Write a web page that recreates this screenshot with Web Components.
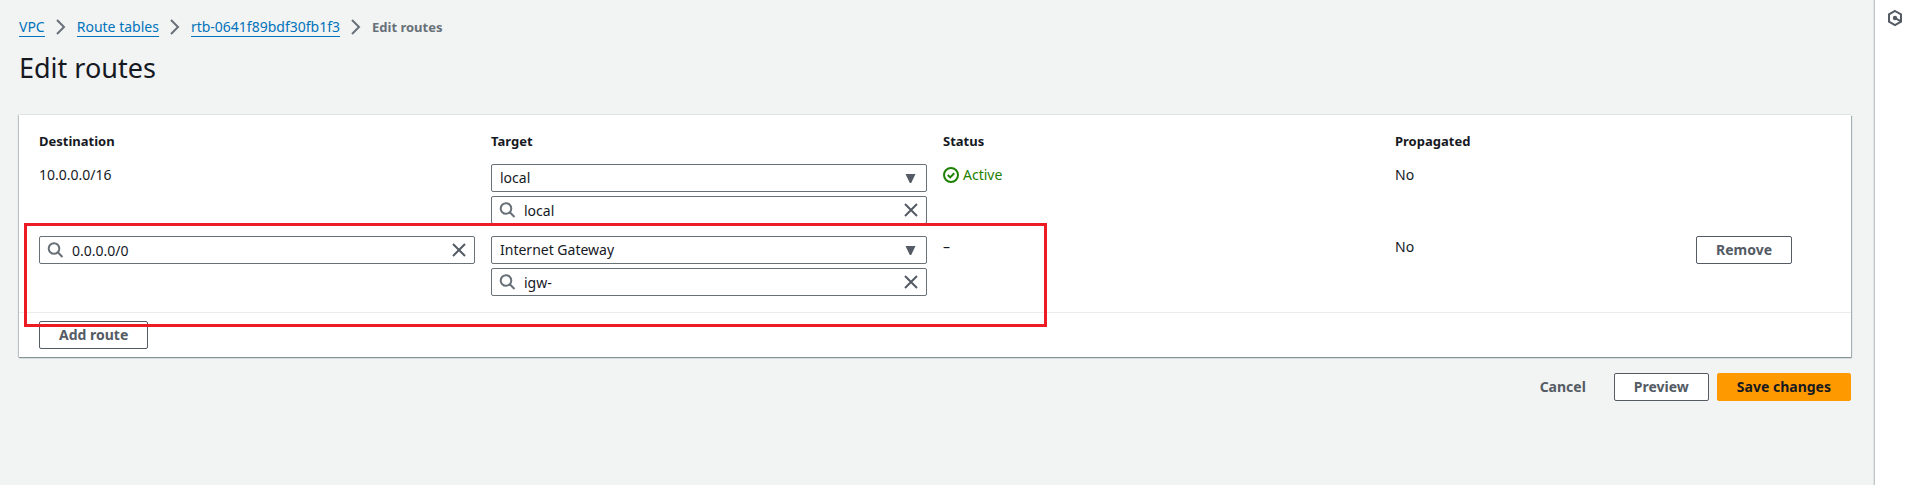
<!DOCTYPE html>
<html lang="en">
<head>
<meta charset="utf-8">
<title>Edit routes</title>
<style>
  html, body { height: 100%; }
  body { margin: 0; background: #f2f3f3; color: #16191f; font: 14px/22px "Noto Sans", "Open Sans", sans-serif; }
</style>
</head>
<body>
<console-shell>
  <crumb-trail>
    <crumb-link href="#vpc">VPC</crumb-link>
    <crumb-link href="#route-tables">Route tables</crumb-link>
    <crumb-link href="#rtb">rtb-0641f89bdf30fb1f3</crumb-link>
    <crumb-link>Edit routes</crumb-link>
  </crumb-trail>
  <page-title>Edit routes</page-title>
  <route-editor></route-editor>
  <form-actions>
    <ui-button variant="link">Cancel</ui-button>
    <ui-button>Preview</ui-button>
    <ui-button variant="primary">Save changes</ui-button>
  </form-actions>
</console-shell>

<script>
const define = (name, html, setup) => {
  const template = document.createElement('template');
  template.innerHTML = html;
  customElements.define(name, class extends HTMLElement {
    constructor() {
      super();
      this.attachShadow({ mode: 'open' }).append(template.content.cloneNode(true));
    }
    connectedCallback() { if (setup) setup(this, this.shadowRoot); }
  });
};

define('console-shell', `
  <style>
    :host { display: flex; min-height: 100%; }
    main { flex: 1; min-width: 0; padding: 16px 23px 24px 19px; }
    aside { flex: none; width: 38px; box-sizing: border-box; background: #fff; border-left: 1px solid #bfc5c7; box-shadow: -1px 0 0 #e1e4e4; display: flex; justify-content: center; align-items: flex-start; padding: 8px 0 0 3px; }
    button { border: 0; padding: 0; background: none; display: flex; }
  </style>
  <main><slot></slot></main>
  <aside>
    <button type="button" aria-label="Open tools">
      <svg width="20" height="20" viewBox="0 0 20 20" fill="none" stroke="#545b64" stroke-width="2">
        <path d="M10 3l6 3.400v7.200l-6 3.400-6-3.400V6.400z"/><path d="M10 10l6 3.400"/><circle cx="10" cy="10" r="2.200" fill="#545b64" stroke="none"/>
      </svg>
    </button>
  </aside>`);

define('crumb-trail', `
  <style>:host { display: block; } nav { display: flex; }</style>
  <nav aria-label="Breadcrumbs"><slot></slot></nav>`);

define('crumb-link', `
  <style>
    :host { display: flex; align-items: center; }
    a { color: #0073bb; text-decoration: none; line-height: 18px; border-bottom: 1px solid #0073bb; }
    b { color: #687078; font-size: 13px; }
    svg { margin: 0 9px; display: block; }
  </style>
  <a><slot></slot></a>
  <svg width="14" height="16" viewBox="0 0 14 16" fill="none" stroke="#687078" stroke-width="2"><path d="M3 1l7 7-7 7"/></svg>`,
  (host, root) => {
    const link = root.querySelector('a');
    if (!link) return;
    if (host.hasAttribute('href')) { link.href = host.getAttribute('href'); return; }
    const current = document.createElement('b');
    current.setAttribute('aria-current', 'page');
    current.append(document.createElement('slot'));
    link.replaceWith(current);
    root.querySelector('svg').remove();
  });

define('page-title', `
  <style>:host { display: block; margin: 12px 0 29px; } h1 { margin: 0; font-size: 27px; line-height: 36px; font-weight: 400; }</style>
  <h1><slot></slot></h1>`);

define('ui-button', `
  <style>
    :host { display: inline-block; }
    button { display: block; box-sizing: border-box; height: 28px; padding: 0 19px; border: 1px solid #545b64; border-radius: 2px; background: #fff; color: #545b64; font: inherit; font-weight: 700; line-height: 26px; white-space: nowrap; }
    :host([variant=link]) button { background: none; border-color: transparent; }
    :host([variant=primary]) button { background: #ff9900; border-color: #ff9900; color: #16191f; }
  </style>
  <button type="button"><slot></slot></button>`);

define('search-field', `
  <style>
    :host { display: flex; align-items: center; box-sizing: border-box; height: 28px; padding: 0 7px; border: 1px solid #687078; border-radius: 2px; background: #fff; }
    input { flex: 1; min-width: 0; height: 26px; border: 0; padding: 0; margin-left: 8px; outline: 0; background: none; color: inherit; font: inherit; }
    button { border: 0; padding: 0; background: none; display: flex; }
    svg { display: block; }
  </style>
  <svg width="17" height="16" viewBox="0 0 17 16" fill="none" stroke="#687078" stroke-width="2"><circle cx="7" cy="6.500" r="5.300"/><path d="M10.800 10.300l4.700 4.700"/></svg>
  <input type="text">
  <button type="button" aria-label="Clear"><svg width="16" height="16" viewBox="0 0 16 16" fill="none" stroke="#545b64" stroke-width="2"><path d="M2 2l12 12M14 2L2 14"/></svg></button>`,
  (host, root) => {
    const input = root.querySelector('input');
    input.value = host.getAttribute('value');
    input.setAttribute('aria-label', host.getAttribute('label'));
  });

define('select-field', `
  <style>
    :host { display: grid; align-items: center; }
    select { grid-area: 1 / 1; width: 100%; height: 28px; box-sizing: border-box; appearance: none; border: 1px solid #687078; border-radius: 2px; background: #fff; color: inherit; font: inherit; padding: 0 32px 0 8px; }
    svg { grid-area: 1 / 1; justify-self: end; margin-right: 11px; pointer-events: none; }
  </style>
  <select><option></option></select>
  <svg width="11" height="9" viewBox="0 0 11 9"><path d="M.500 0h10L6.200 9H4.800z" fill="#545b64"/></svg>`,
  (host, root) => {
    root.querySelector('option').textContent = host.getAttribute('value');
    root.querySelector('select').setAttribute('aria-label', host.getAttribute('label'));
  });

define('status-badge', `
  <style>:host { display: flex; align-items: center; gap: 4px; color: #1d8102; } svg { display: block; }</style>
  <svg width="16" height="16" viewBox="0 0 16 16" fill="none" stroke="#1d8102" stroke-width="2"><circle cx="8" cy="8" r="7"/><path d="M4.800 8l2.400 2.400 4-4.200"/></svg>
  <span><slot></slot></span>`);

define('route-editor', `
  <style>
    :host { display: block; position: relative; background: #fff; box-shadow: 0 1px 1px #879596, 1px 1px 1px #aab7b8, -1px 0 1px #c4cbcc, 0 -1px 0 #e6e8e8; }
    .rows { padding: 15px 4px 4px 20px; }
    table { width: 100%; table-layout: fixed; border-collapse: collapse; }
    th, td { padding: 0 16px 12px 0; text-align: left; vertical-align: top; }
    th { font-size: 13px; }
    th:nth-child(-n+3) { width: 25%; box-sizing: border-box; }
    th:last-child { width: 151px; box-sizing: border-box; }
    .stack { display: grid; gap: 4px; }
    footer { border-top: 1px solid #eaeded; padding: 8px 20px; }
    .highlight { position: absolute; left: 5px; top: 108px; width: calc(50% + 107px); height: 104px; box-sizing: border-box; border: 3px solid #ed1c24; pointer-events: none; }
    footer ui-button { display: block; width: max-content; }
  </style>
  <div class="rows">
    <table>
      <thead><tr><th scope="col">Destination</th><th scope="col">Target</th><th scope="col">Status</th><th scope="col">Propagated</th><th></th></tr></thead>
      <tbody>
        <tr>
          <td>10.0.0.0/16</td>
          <td><div class="stack"><select-field label="Target type" value="local"></select-field><search-field label="Target" value="local"></search-field></div></td>
          <td><status-badge>Active</status-badge></td>
          <td>No</td>
          <td></td>
        </tr>
        <tr>
          <td><search-field label="Destination" value="0.0.0.0/0"></search-field></td>
          <td><div class="stack"><select-field label="Target type" value="Internet Gateway"></select-field><search-field label="Target" value="igw-"></search-field></div></td>
          <td>–</td>
          <td>No</td>
          <td><ui-button>Remove</ui-button></td>
        </tr>
      </tbody>
    </table>
  </div>
  <footer><ui-button>Add route</ui-button></footer>
  <div class="highlight"></div>`);

define('form-actions', `
  <style>:host { display: flex; justify-content: flex-end; gap: 8px; margin-top: 16px; }</style>
  <slot></slot>`);
</script>
</body>
</html>
